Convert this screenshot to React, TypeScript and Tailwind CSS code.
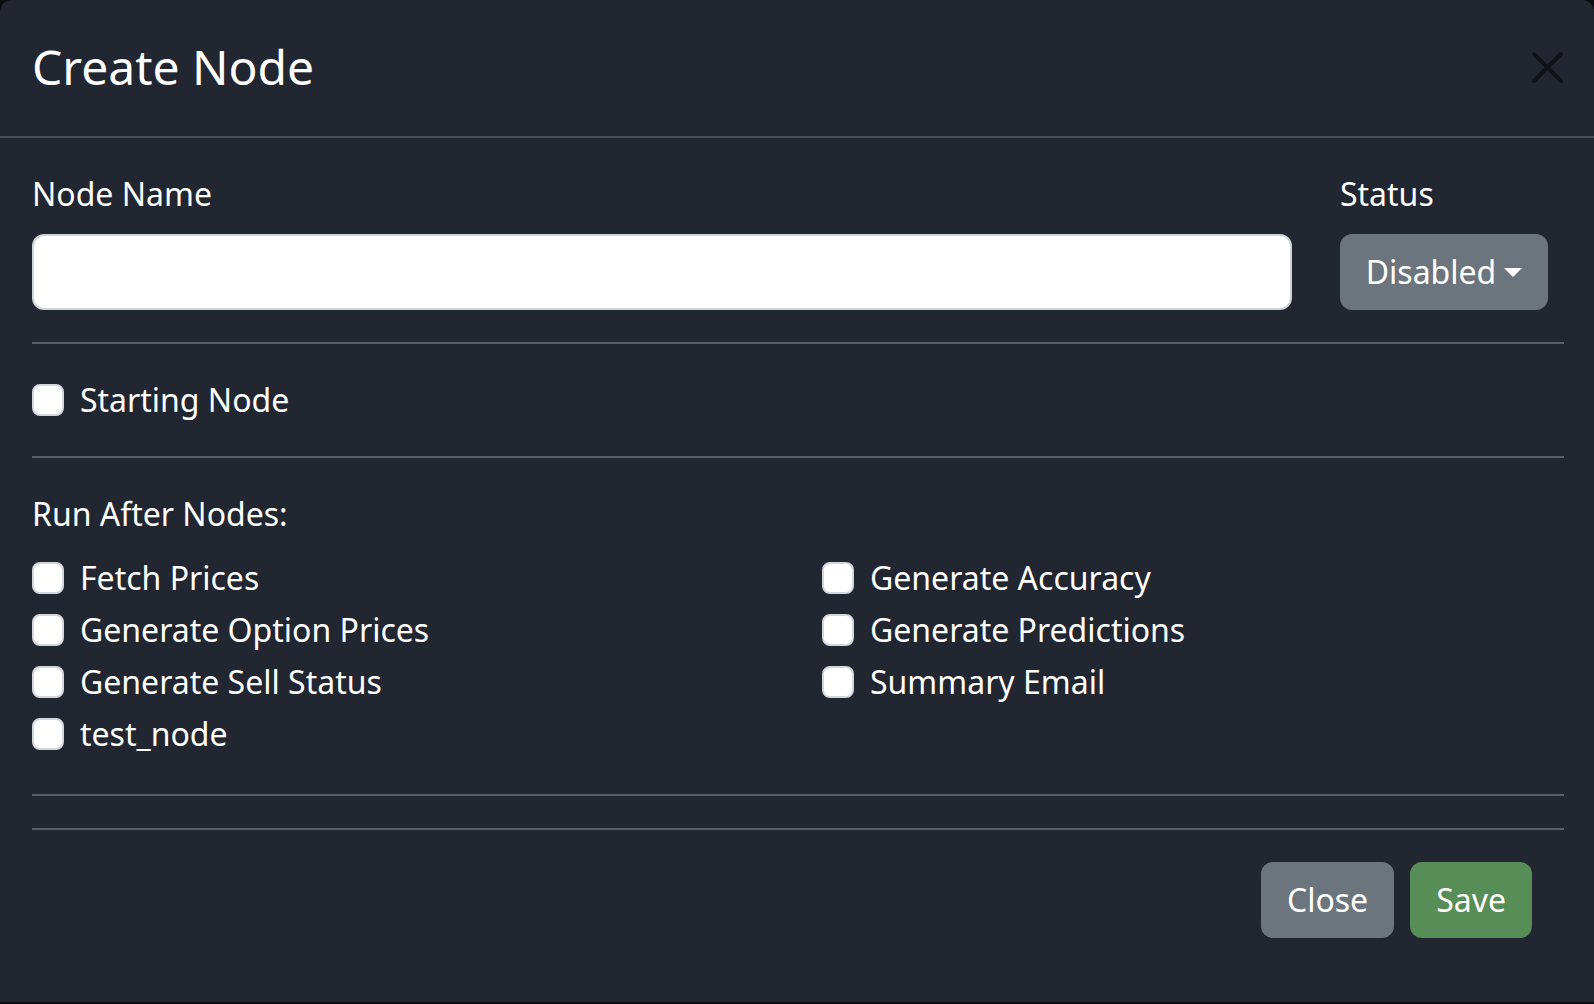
import React from "react";

const leftNodes = ["Fetch Prices", "Generate Option Prices", "Generate Sell Status", "test_node"];
const rightNodes = ["Generate Accuracy", "Generate Predictions", "Summary Email"];

function Check({ label }: { label: string }) {
  return (
    <label className="mb-1 flex h-[48px] items-start gap-4">
      <input
        type="checkbox"
        className="mt-2 h-8 w-8 shrink-0 appearance-none rounded-lg border-2 border-[#d3d7dc] bg-white"
      />
      <span className="leading-[48px]">{label}</span>
    </label>
  );
}

export default function App() {
  return (
    <div
      className="min-h-screen bg-[#0c0d0f]"
      style={{ fontFamily: '"Noto Sans", "Open Sans", sans-serif' }}
    >
      <div className="flex h-[1002px] flex-col rounded-t-xl bg-[#212631] text-[32px] text-white">
        {/* Header */}
        <div className="flex h-[138px] items-start justify-between border-b-2 border-[#4b5058] pl-8 pr-[31px] pt-[38px]">
          <h1 className="text-[48px] font-normal leading-[58px]">Create Node</h1>
          <button className="mt-[14px] opacity-50" aria-label="Close">
            <svg width="31" height="31" viewBox="0 0 31 31">
              <path d="M2 2 L29 29 M29 2 L2 29" stroke="#000" strokeWidth="4" strokeLinecap="round" />
            </svg>
          </button>
        </div>

        {/* Body */}
        <div className="pl-8 pr-[30px] pt-[32px]">
          <div className="flex gap-12">
            <div className="flex-1">
              <div className="mb-4 leading-[48px]">Node Name</div>
              <input
                type="text"
                className="h-[76px] w-full rounded-xl border-2 border-[#ced4da] bg-white px-6 text-[32px] text-[#212529] outline-none"
              />
            </div>
            <div className="mr-4 w-[208px]">
              <div className="mb-4 leading-[48px]">Status</div>
              <button className="flex h-[76px] w-full items-center justify-center rounded-xl bg-[#6c757d] text-white">
                <span className="leading-[48px]">Disabled</span>
                <span className="ml-2 h-0 w-0 border-x-[9px] border-t-[9px] border-x-transparent border-t-white" />
              </button>
            </div>
          </div>

          <hr className="my-8 border-t-2 border-[#585d66]" />

          <label className="flex h-[48px] items-start gap-4">
            <input
              type="checkbox"
              className="mt-2 h-8 w-8 shrink-0 appearance-none rounded-lg border-2 border-[#d3d7dc] bg-white"
            />
            <span className="leading-[48px]">Starting Node</span>
          </label>

          <hr className="my-8 border-t-2 border-[#585d66]" />

          <div className="mb-4 leading-[48px]">Run After Nodes:</div>
          <div className="grid grid-cols-2 gap-x-12">
            <div>
              {leftNodes.map((n) => (
                <Check key={n} label={n} />
              ))}
            </div>
            <div>
              {rightNodes.map((n) => (
                <Check key={n} label={n} />
              ))}
            </div>
          </div>

          <hr className="mt-8 border-t-2 border-[#585d66]" />
          <hr className="mt-8 border-t-2 border-[#585d66]" />
        </div>

        {/* Footer */}
        <div className="flex justify-end gap-4 pr-[62px] pt-8">
          <button className="h-[76px] rounded-xl bg-[#6c757d] px-[26px] leading-[48px] text-white">Close</button>
          <button className="h-[76px] rounded-xl bg-[#578d56] px-[26px] leading-[48px] text-white">Save</button>
        </div>
      </div>
    </div>
  );
}
